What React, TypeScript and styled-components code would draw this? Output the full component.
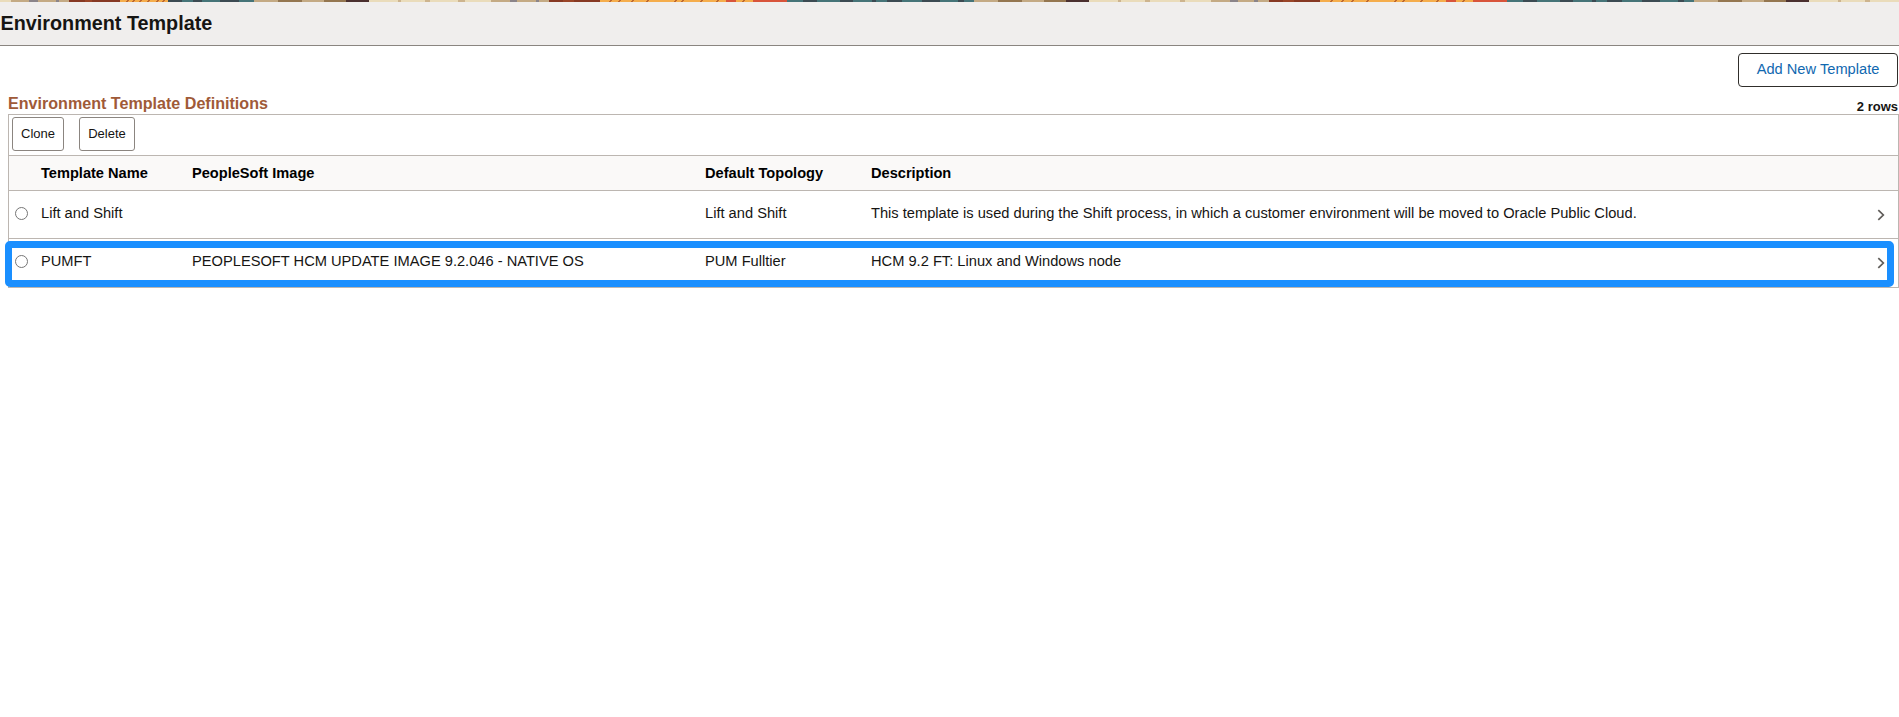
import React from 'react';
import styled, { createGlobalStyle } from 'styled-components';

const GlobalStyle = createGlobalStyle`
  * { box-sizing: border-box; }
  body {
    margin: 0;
    background: #fff;
    color: #161513;
    font-family: "Liberation Sans", Arial, Helvetica, sans-serif;
    font-size: 14.67px;
    overflow-x: hidden;
  }
`;

const Page = styled.div`
  display: flex;
  flex-direction: column;
`;

const BannerArt = styled.svg`
  display: block;
  width: 100%;
  height: 2px;
`;

const PageHeader = styled.header`
  height: 44px;
  background: #f0eeed;
  border-bottom: 1px solid #8a8580;
`;

const Title = styled.h1`
  margin: 0;
  padding: 10px 0 0 0.5px;
  font-size: 19.8px;
  line-height: 22px;
  font-weight: 700;
`;

const Actions = styled.div`
  display: flex;
  justify-content: flex-end;
  padding: 7px 1px 0 0;
`;

const AddButton = styled.button`
  width: 160px;
  height: 34px;
  padding: 0 0 3px;
  border: 1px solid #302e2b;
  border-radius: 4px;
  background: #fff;
  color: #1068b0;
  font: inherit;
`;

const GridSection = styled.section`
  padding: 6px 0 0 8px;
`;

const GridCaption = styled.div`
  height: 21px;
  display: flex;
  justify-content: space-between;
`;

const GridTitle = styled.h2`
  margin: 0;
  font-size: 16.1px;
  line-height: 20px;
  font-weight: 700;
  color: #9f5a38;
`;

const RowCount = styled.span`
  padding: 6px 1px 0 0;
  font-size: 13px;
  line-height: 16px;
  font-weight: 700;
`;

const GridBox = styled.div`
  border: 1px solid #bcb6b1;
`;

const Toolbar = styled.div`
  height: 40px;
  padding: 2px 0 0 3px;
  display: flex;
  gap: 15px;
`;

const ToolButton = styled.button<{ $width: number }>`
  width: ${p => p.$width}px;
  height: 34px;
  padding: 0 0 1px;
  border: 1px solid #8b8580;
  border-radius: 3px;
  background: #fff;
  color: #161513;
  font: inherit;
  font-size: 13px;
`;

const Row = styled.div<{ $header?: boolean }>`
  position: relative;
  display: grid;
  grid-template-columns: 32px 151px 513px 166px 1fr 27px;
  align-items: center;
  height: ${p => (p.$header ? 35 : 48)}px;
  border-top: 1px solid #bcb6b1;
  background: ${p => (p.$header ? '#faf9f8' : '#fff')};
  color: ${p => (p.$header ? '#000' : '#161513')};
  font-weight: ${p => (p.$header ? 700 : 400)};
  font-size: ${p => (p.$header ? 14.6 : 14.67)}px;

  &:last-child {
    height: 49px;
    padding-bottom: 1px;
  }
`;

const Cell = styled.span<{ $header?: boolean }>`
  white-space: nowrap;
  line-height: 18px;
  padding-bottom: ${p => (p.$header ? 0 : 3)}px;
`;

const Radio = styled.input`
  appearance: none;
  width: 13px;
  height: 13px;
  margin: 0 0 2px 6px;
  border: 1px solid #767676;
  border-radius: 50%;
  background: #fff;
`;

const Chevron = styled.svg`
  width: 8px;
  height: 12px;
  margin-left: 6px;
`;

const Highlight = styled.div`
  position: absolute;
  inset: 2px 4px 0 -4px;
  border: 7px solid #1a8fff;
  border-radius: 5px;
  pointer-events: none;
`;

const CREAM = '#eadcbb';
const TAN = '#c4aa84';
const RUST = '#873923';
const GOLD = '#f5ad4c';
const RED = '#d8543b';
const TEAL = '#467478';
const SLATE = '#3c4a52';
const OLIVE = '#947650';
const PLUM = '#4b302f';
const GRAY = '#8b8489';
const SAND = '#cdb48e';

// Each stripe runs from its start to the start of the next one.
const stripes: [number, string][] = [
  [0, CREAM], [11, TAN], [29, GRAY], [38, TAN], [56, GRAY], [59, TAN],
  [69, RUST], [85, '#9a4528'], [92, RUST], [120, GOLD],
  [168, SLATE], [182, TEAL], [193, SLATE], [202, TEAL], [220, SLATE], [239, TEAL],
  [254, TAN], [278, OLIVE], [302, TAN], [324, OLIVE], [346, PLUM],
  [369, CREAM], [398, SAND], [401, CREAM], [425, SAND], [430, CREAM], [458, SAND], [465, CREAM],
  [491, TAN], [510, GRAY], [517, TAN], [536, GRAY], [539, TAN],
  [549, RUST], [563, '#9a4528'], [574, RUST], [600, GOLD],
  [726, RED], [736, GOLD], [753, RED], [787, TEAL],
  [803, SLATE], [817, TEAL], [840, SLATE], [853, TEAL], [872, SLATE], [876, TEAL], [887, SLATE], [902, TEAL], [922, SLATE], [940, TEAL], [958, SLATE], [964, TEAL],
  [974, TAN], [998, OLIVE], [1022, TAN], [1044, OLIVE], [1066, PLUM],
  [1089, CREAM], [1118, SAND], [1121, CREAM], [1145, SAND], [1150, CREAM], [1180, SAND], [1185, CREAM],
  [1211, TAN], [1230, GRAY], [1238, TAN], [1254, GRAY], [1258, TAN],
  [1269, RUST], [1283, '#9a4528'], [1294, RUST], [1320, GOLD],
  [1446, RED], [1456, GOLD], [1473, RED], [1507, TEAL],
  [1523, SLATE], [1537, TEAL], [1560, SLATE], [1573, TEAL], [1592, SLATE], [1596, TEAL], [1607, SLATE], [1622, TEAL], [1642, SLATE], [1660, TEAL], [1678, SLATE], [1684, TEAL],
  [1694, TAN], [1718, OLIVE], [1742, TAN], [1764, OLIVE], [1786, PLUM],
  [1809, CREAM], [1838, SAND], [1841, CREAM], [1865, SAND], [1870, CREAM],
];

const flecks = [126, 132, 139, 147, 156, 162, 609, 618, 631, 646, 674, 681, 700, 716, 742, 1330, 1341, 1351, 1366, 1394, 1402, 1420, 1436, 1462];

function Banner() {
  return (
    <BannerArt viewBox="0 0 1899 2" preserveAspectRatio="none" shapeRendering="crispEdges" aria-hidden>
      {stripes.map(([x, color], i) => (
        <rect key={i} x={x} y={0} width={(stripes[i + 1]?.[0] ?? 1899) - x} height={2} fill={color} />
      ))}
      {flecks.map(x => (
        <path key={x} d={`M${x} 2h2v-1h1v-1h-2v1h-1z`} fill="#bd672f" />
      ))}
    </BannerArt>
  );
}

const templates = [
  {
    name: 'Lift and Shift',
    image: '',
    topology: 'Lift and Shift',
    description:
      'This template is used during the Shift process, in which a customer environment will be moved to Oracle Public Cloud.',
    highlighted: false,
  },
  {
    name: 'PUMFT',
    image: 'PEOPLESOFT HCM UPDATE IMAGE 9.2.046 - NATIVE OS',
    topology: 'PUM Fulltier',
    description: 'HCM 9.2 FT: Linux and Windows node',
    highlighted: true,
  },
];

export default function App() {
  return (
    <Page>
      <GlobalStyle />
      <Banner />
      <PageHeader>
        <Title>Environment Template</Title>
      </PageHeader>
      <Actions>
        <AddButton>Add New Template</AddButton>
      </Actions>
      <GridSection>
        <GridCaption>
          <GridTitle>Environment Template Definitions</GridTitle>
          <RowCount>2 rows</RowCount>
        </GridCaption>
        <GridBox>
          <Toolbar>
            <ToolButton $width={52}>Clone</ToolButton>
            <ToolButton $width={56}>Delete</ToolButton>
          </Toolbar>
          <Row $header>
            <span />
            <Cell $header>Template Name</Cell>
            <Cell $header>PeopleSoft Image</Cell>
            <Cell $header>Default Topology</Cell>
            <Cell $header>Description</Cell>
          </Row>
          {templates.map(t => (
            <Row key={t.name}>
              <Radio type="radio" name="template" aria-label={t.name} />
              <Cell>{t.name}</Cell>
              <Cell>{t.image}</Cell>
              <Cell>{t.topology}</Cell>
              <Cell>{t.description}</Cell>
              <Chevron viewBox="0 0 8 12" fill="none" stroke="#5f5c59" strokeWidth="1.7">
                <path d="M1.3 1.2 6.3 6 1.3 10.8" />
              </Chevron>
              {t.highlighted && <Highlight />}
            </Row>
          ))}
        </GridBox>
      </GridSection>
    </Page>
  );
}
